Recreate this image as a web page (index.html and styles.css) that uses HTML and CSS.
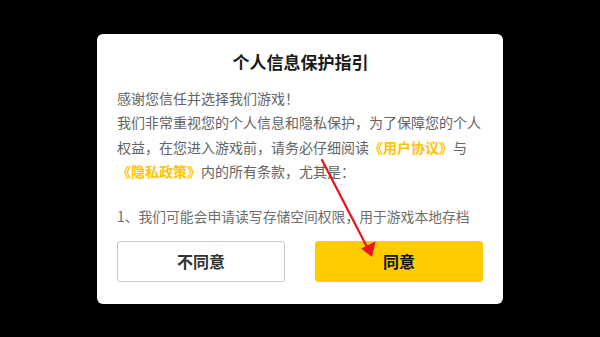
FILE: index.html
```html
<!DOCTYPE html>
<html lang="zh-CN">
<head>
<meta charset="utf-8">
<link rel="stylesheet" href="styles.css">
</head>
<body>
<div class="screen">
  <div class="dialog">
    <h1 class="title">个人信息保护指引</h1>
    <div class="content">
      <p class="para">感谢您信任并选择我们游戏！<br>我们非常重视您的个人信息和隐私保护，为了保障您的个人<br>权益，在您进入游戏前，请务必仔细阅读<span class="link">《用户协议》</span>与<br><span class="link">《隐私政策》</span>内的所有条款，尤其是：</p>
      <p class="para item">1、我们可能会申请读写存储空间权限，用于游戏本地存档</p>
    </div>
    <div class="actions">
      <button class="btn btn-decline">不同意</button>
      <button class="btn btn-accept">同意</button>
    </div>
  </div>
  <svg class="arrow" width="600" height="337" viewBox="0 0 600 337">
    <line x1="322" y1="160" x2="367" y2="247" stroke="#e8141e" stroke-width="2.2" stroke-linecap="round"/>
    <polygon points="372,257 375.5,241.5 361,248.5" fill="#e8141e"/>
  </svg>
</div>
</body>
</html>
```
FILE: styles.css
```css
html, body {
  margin: 0;
  padding: 0;
  background: #000;
}
body {
  font-family: "Noto Sans CJK SC", "Noto Sans", sans-serif;
}
.screen {
  position: relative;
  width: 600px;
  height: 337px;
  display: flex;
  align-items: center;
  justify-content: center;
  background: #000;
}
.dialog {
  width: 406px;
  height: 270px;
  box-sizing: border-box;
  background: #fff;
  border-radius: 6px;
  padding: 16px 19px 22px 20px;
  display: flex;
  flex-direction: column;
}
.title {
  margin: 0;
  font-size: 17px;
  line-height: 24px;
  font-weight: 700;
  color: #1a1a1a;
  text-align: center;
}
.content {
  margin-top: 12px;
  flex: 1;
  overflow: hidden;
}
.para {
  margin: 0;
  font-size: 14px;
  line-height: 24.5px;
  color: #646464;
  white-space: nowrap;
}
.item {
  margin-top: 20px;
  font-size: 13.8px;
  color: #6e6e6e;
}
.link {
  color: #ffc400;
  font-weight: 700;
}
.actions {
  display: flex;
  gap: 30px;
  margin-top: 12px;
}
.btn {
  width: 168px;
  height: 41px;
  box-sizing: border-box;
  border-radius: 3px;
  font-family: "Noto Sans CJK SC", "Noto Sans", sans-serif;
  font-size: 16px;
  font-weight: 700;
  padding: 0;
}
.btn-decline {
  background: #fff;
  border: 1px solid #c8c8c8;
  color: #333;
}
.btn-accept {
  background: #ffcc00;
  border: 1px solid #ffcc00;
  color: #111;
}
.arrow {
  position: absolute;
  left: 0;
  top: 0;
  pointer-events: none;
}
```
